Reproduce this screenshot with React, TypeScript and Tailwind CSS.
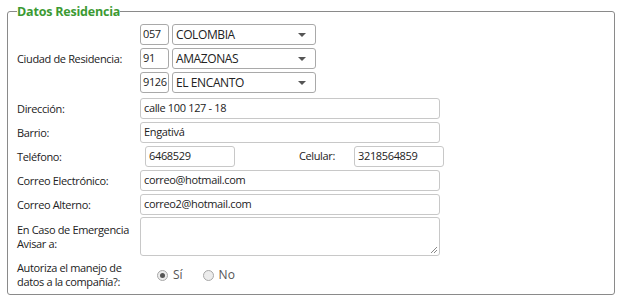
import React from "react";

const font = { fontFamily: '"Open Sans", "Noto Sans", sans-serif' };

function Label({ children }: { children: React.ReactNode }) {
  return (
    <div className="w-[123px] shrink-0 text-[11px] leading-[14px] text-[#222] tracking-[-0.35px]">
      {children}
    </div>
  );
}

function TextInput({ value, w = "w-[300px]" }: { value: string; w?: string }) {
  return (
    <div
      className={`${w} h-[21px] flex items-center px-[3px] border border-[#c8c8c8] rounded-[3px] text-[11px] text-[#222] tracking-[-0.35px] bg-white`}
    >
      {value}
    </div>
  );
}

function SelectRow({ code, name }: { code: string; name: string }) {
  return (
    <div className="flex items-center gap-[3px] h-[21px]">
      <div className="w-[29px] h-[21px] flex items-center px-[2px] border border-[#a9a9a9] rounded-[3px] text-[11px] text-[#222] tracking-[-0.4px]">
        {code}
      </div>
      <div className="w-[144px] h-[21px] flex items-center justify-between pl-[3px] pr-[9px] border border-[#a9a9a9] rounded-[3px] text-[12px] text-[#222] tracking-[-0.4px]">
        <span>{name}</span>
        <svg width="8" height="4" viewBox="0 0 8 4">
          <path d="M0 0 L8 0 L4 4 Z" fill="#555" />
        </svg>
      </div>
    </div>
  );
}

function Radio({ checked, label }: { checked?: boolean; label: string }) {
  return (
    <div className="flex items-center gap-[5px] text-[12px] text-[#555]">
      <span className="w-[11px] h-[11px] rounded-full border border-[#a8a8a8] bg-[#ececec] flex items-center justify-center">
        {checked && <span className="w-[5px] h-[5px] rounded-full bg-[#555]" />}
      </span>
      {label}
    </div>
  );
}

export default function App() {
  return (
    <div className="w-[628px] h-[304px] bg-white pl-[7px] pt-[3px]" style={font}>
      <fieldset className="w-[608px] h-[292px] border border-[#8a8a8a] rounded-[3px] px-[9px]">
        <legend className="px-0 text-[12.5px] font-bold text-[#3c9a33] leading-[17px] tracking-[-0.2px]">
          Datos Residencia
        </legend>
        <div className="flex flex-col mt-[4px]">
          <div className="flex items-center">
            <Label>Ciudad de Residencia:</Label>
            <div className="flex flex-col gap-[3px]">
              <SelectRow code="057" name="COLOMBIA" />
              <SelectRow code="91" name="AMAZONAS" />
              <SelectRow code="9126" name="EL ENCANTO" />
            </div>
          </div>
          <div className="flex items-center mt-[5px]">
            <Label>Dirección:</Label>
            <TextInput value="calle 100 127 - 18" />
          </div>
          <div className="flex items-center mt-[3px]">
            <Label>Barrio:</Label>
            <TextInput value="Engativá" />
          </div>
          <div className="flex items-center mt-[3px]">
            <Label>Teléfono:</Label>
            <div className="ml-[5px]">
              <TextInput value="6468529" w="w-[90px]" />
            </div>
            <div className="w-[119px] text-[11px] text-[#222] text-right pr-[19px] tracking-[-0.35px]">Celular:</div>
            <TextInput value="3218564859" w="w-[90px]" />
          </div>
          <div className="flex items-center mt-[3px]">
            <Label>Correo Electrónico:</Label>
            <TextInput value="correo@hotmail.com" />
          </div>
          <div className="flex items-center mt-[3px]">
            <Label>Correo Alterno:</Label>
            <TextInput value="correo2@hotmail.com" />
          </div>
          <div className="flex items-center mt-[2px]">
            <Label>
              En Caso de Emergencia
              <br />
              Avisar a:
            </Label>
            <div className="relative w-[300px] h-[39px] border border-[#c8c8c8] rounded-[3px]">
              <svg className="absolute right-[1px] bottom-[1px]" width="8" height="8" viewBox="0 0 8 8">
                <path d="M7 1 L1 7 M7 4 L4 7" stroke="#888" strokeWidth="1" />
              </svg>
            </div>
          </div>
          <div className="flex items-center mt-[5px]">
            <Label>
              Autoriza el manejo de
              <br />
              datos a la compañía?:
            </Label>
            <div className="flex items-center gap-[20px] ml-[17px]">
              <Radio checked label="Sí" />
              <Radio label="No" />
            </div>
          </div>
        </div>
      </fieldset>
    </div>
  );
}
